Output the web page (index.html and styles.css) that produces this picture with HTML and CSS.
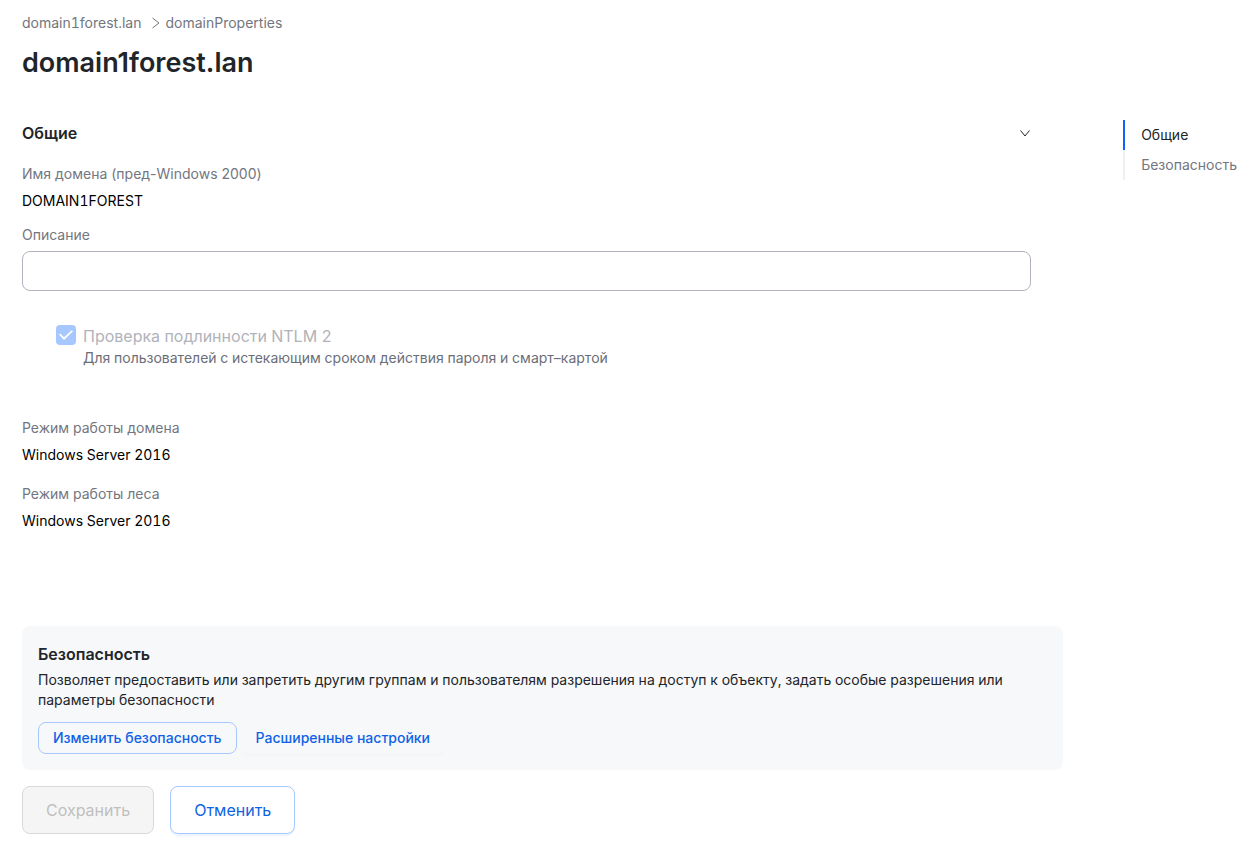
FILE: index.html
```html
<!DOCTYPE html>
<html lang="ru">
<head>
    <meta charset="UTF-8" />
    <meta name="viewport" content="width=device-width, initial-scale=1.0" />
    <title>domain1forest.lan</title>
    <link rel="stylesheet" href="styles.css">
</head>
<body>
    <div class="page">
        <main class="content">
            <nav class="breadcrumbs">
                <a href="#">domain1forest.lan</a>
                <svg class="breadcrumb-arrow" width="8" height="12" viewBox="0 0 8 12"><path d="M0.500 1l6.500 5-6.500 5" /></svg>
                <a href="#">domainProperties</a>
            </nav>
            <h1>domain1forest.lan</h1>

            <section class="general" id="general">
                <div class="section-header">
                    <h2>Общие</h2>
                    <button class="collapse-btn" type="button" aria-label="Свернуть">
                        <svg width="12" height="8" viewBox="0 0 12 8"><path d="M1.500 1.500L6 7l4.500-5.500" /></svg>
                    </button>
                </div>

                <dl class="field">
                    <dt>Имя домена (пред-Windows 2000)</dt>
                    <dd>DOMAIN1FOREST</dd>
                </dl>

                <div class="form-item">
                    <label for="description">Описание</label>
                    <input type="text" id="description">
                </div>

                <div class="check-item">
                    <input type="checkbox" id="ntlm" checked disabled>
                    <div>
                        <label for="ntlm">Проверка подлинности NTLM 2</label>
                        <p>Для пользователей с истекающим сроком действия пароля и смарт–картой</p>
                    </div>
                </div>

                <dl class="field">
                    <dt>Режим работы домена</dt>
                    <dd>Windows Server 2016</dd>
                    <dt>Режим работы леса</dt>
                    <dd>Windows Server 2016</dd>
                </dl>
            </section>

            <section class="security" id="security">
                <h2>Безопасность</h2>
                <p>Позволяет предоставить или запретить другим группам и пользователям разрешения на доступ к объекту, задать особые разрешения или параметры безопасности</p>
                <div class="security-actions">
                    <button class="btn btn-small" type="button">Изменить безопасность</button>
                    <button class="btn btn-small btn-text" type="button">Расширенные настройки</button>
                </div>
            </section>

            <div class="form-actions">
                <button class="btn" type="button" disabled>Сохранить</button>
                <button class="btn" type="button">Отменить</button>
            </div>
        </main>

        <nav class="anchors">
            <a class="active" href="#general">Общие</a>
            <a href="#security">Безопасность</a>
        </nav>
    </div>
</body>
</html>
```
FILE: styles.css
```css
* { box-sizing: border-box; }
body {
    margin: 0;
    font-family: Inter, "Liberation Sans", sans-serif;
    font-size: 14px;
    line-height: 20px;
    font-variant-numeric: tabular-nums;
    color: #212529;
    background: #fff;
}
h1, h2, p, dl, dd { margin: 0; }
a { color: inherit; text-decoration: none; }
button, input { font-family: inherit; }
svg { display: block; fill: none; stroke: currentColor; }

.page {
    display: flex;
    gap: 60px;
    padding: 13px 14px 10px 22px;
}
.content { flex: 1; min-width: 0; }

.breadcrumbs {
    display: flex;
    align-items: center;
    color: #73767f;
}
.breadcrumb-arrow { margin: 0 5px 0 11px; }
h1 {
    margin-top: 12px;
    font-size: 27px;
    line-height: 36px;
    font-weight: 600;
    font-variant-numeric: normal;
}
h2 {
    font-size: 16px;
    line-height: 24px;
    font-weight: 600;
}

.general { padding: 40px 32px 0 0; }
.section-header {
    display: flex;
    justify-content: space-between;
    align-items: center;
    margin-bottom: 19px;
}
.collapse-btn {
    padding: 0;
    border: 0;
    background: none;
    color: #212529;
    cursor: pointer;
}

.field dt, .form-item label { color: #73767f; }
.field dt { font-variant-numeric: normal; }
.field dd { margin-top: 7px; color: #000; }
.field dd + dt { margin-top: 19px; }

.form-item { margin-top: 14px; }
.form-item label { display: block; }
.form-item input {
    display: block;
    width: 100%;
    height: 40px;
    margin-top: 6px;
    padding: 0 12px;
    border: 1px solid #b1b3bd;
    border-radius: 8px;
    font-size: 16px;
}

.check-item {
    display: flex;
    gap: 7px;
    margin: 33px 0 50px 34px;
}
.check-item input {
    appearance: none;
    flex: none;
    display: grid;
    place-items: center;
    width: 20px;
    height: 20px;
    margin: 1px 0 0;
    border-radius: 4px;
    background: #a6c8ff;
}
/* tick mark */
.check-item input::after {
    content: "";
    width: 14px;
    height: 10px;
    background: #fff;
    clip-path: polygon(0 46%, 8% 36%, 36% 72%, 91% 3%, 100% 12%, 36% 100%);
}
.check-item label {
    display: block;
    font-size: 16px;
    line-height: 24px;
    color: #b1b3b9;
}
.check-item p { color: #6b6e78; }

.security {
    margin-top: 95px;
    padding: 16px;
    border-radius: 8px;
    background: #f7f8fa;
}
.security p { margin-top: 4px; }
.security-actions {
    display: flex;
    gap: 4px;
    margin-top: 12px;
}

.btn {
    height: 48px;
    padding: 0 23px;
    border: 1px solid #a6c8ff;
    border-radius: 8px;
    background: #fff;
    box-shadow: 0 2px 0 #edf5ff;
    color: #0f62e6;
    font-size: 16px;
    cursor: pointer;
}
.btn:disabled {
    border-color: #d9d9d9;
    background: #f5f5f5;
    box-shadow: none;
    color: #bfbfbf;
    cursor: default;
}
.btn-small {
    height: 32px;
    padding: 0 14px 2px;
    background: transparent;
    box-shadow: none;
    font-size: 14px;
    font-weight: 500;
}
.btn-text {
    border-color: transparent;
    box-shadow: 0 2px 0 #f4f5f7;
}
.form-actions {
    display: flex;
    gap: 16px;
    margin-top: 16px;
}

.anchors {
    display: flex;
    flex-direction: column;
    margin-top: 107px;
}
.anchors a {
    padding: 5px 0 5px 16px;
    border-left: 2px solid #f0f0f0;
    color: #73767f;
}
.anchors .active { border-color: #0f62fe; color: #212529; }
```
